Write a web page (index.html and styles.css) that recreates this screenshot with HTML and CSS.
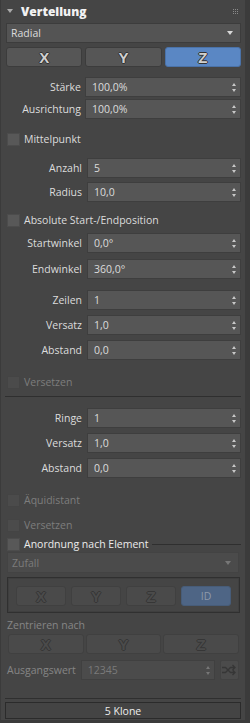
FILE: index.html
```html
<!DOCTYPE html>
<html lang="de">
<head>
<meta charset="utf-8">
<link rel="stylesheet" href="styles.css">
</head>
<body>
<div class="panel">
  <div class="header">
    <span class="twisty"></span>
    <span class="title">Verteilung</span>
    <span class="grip"><i></i><i></i><i></i><i></i><i></i><i></i><i></i><i></i><i></i></span>
  </div>

  <div class="select mt1"><span>Radial</span><span class="caret"></span></div>

  <div class="axes mt4">
    <div class="axis">X</div>
    <div class="axis">Y</div>
    <div class="axis on">Z</div>
  </div>

  <div class="field g1 mt10"><span class="lbl">Stärke</span><div class="spin"><span>100,0%</span><span class="arrows"></span></div></div>
  <div class="field g1 mt2"><span class="lbl">Ausrichtung</span><div class="spin"><span>100,0%</span><span class="arrows"></span></div></div>

  <div class="check mt13"><span class="box"></span><span>Mittelpunkt</span></div>

  <div class="field mt12"><span class="lbl">Anzahl</span><div class="spin"><span>5</span><span class="arrows"></span></div></div>
  <div class="field mt4"><span class="lbl">Radius</span><div class="spin"><span>10,0</span><span class="arrows"></span></div></div>

  <div class="check mt11"><span class="box"></span><span>Absolute Start-/Endposition</span></div>

  <div class="field mt6"><span class="lbl">Startwinkel</span><div class="spin"><span>0,0°</span><span class="arrows"></span></div></div>
  <div class="field mt6"><span class="lbl">Endwinkel</span><div class="spin"><span>360,0°</span><span class="arrows"></span></div></div>

  <div class="field mt11"><span class="lbl">Zeilen</span><div class="spin"><span>1</span><span class="arrows"></span></div></div>
  <div class="field mt5"><span class="lbl">Versatz</span><div class="spin"><span>1,0</span><span class="arrows"></span></div></div>
  <div class="field mt5"><span class="lbl">Abstand</span><div class="spin"><span>0,0</span><span class="arrows"></span></div></div>

  <div class="check off mt15"><span class="box"></span><span>Versetzen</span></div>

  <div class="rule mt7"></div>

  <div class="field mt11"><span class="lbl">Ringe</span><div class="spin"><span>1</span><span class="arrows"></span></div></div>
  <div class="field mt5"><span class="lbl">Versatz</span><div class="spin"><span>1,0</span><span class="arrows"></span></div></div>
  <div class="field mt5"><span class="lbl">Abstand</span><div class="spin"><span>0,0</span><span class="arrows"></span></div></div>

  <div class="check off mt15"><span class="box"></span><span>Äquidistant</span></div>
  <div class="check off mt11"><span class="box"></span><span>Versetzen</span></div>
  <div class="check bright mt5"><span class="box"></span><span>Anordnung nach Element</span><span class="line"></span></div>

  <div class="select dis mt1"><span>Zufall</span><span class="caret"></span></div>

  <div class="group mt4">
    <div class="axis dis">X</div>
    <div class="axis dis">Y</div>
    <div class="axis dis">Z</div>
    <div class="axis dis sel">ID</div>
  </div>

  <div class="caption mt4">Zentrieren nach</div>
  <div class="axes dis mt1">
    <div class="axis dis">X</div>
    <div class="axis dis">Y</div>
    <div class="axis dis">Z</div>
  </div>

  <div class="seed mt6">
    <span class="lbl">Ausgangswert</span>
    <div class="spin dis"><span>12345</span><span class="arrows"></span></div>
    <div class="shuffle">
      <svg width="16" height="12" viewBox="0 0 16 12"><path d="M1 3.5H4.5L9.5 8.5H14M1 8.5H4.5L9.5 3.5H14M11.5 1L14 3.5L11.5 6M11.5 6L14 8.5L11.5 11" fill="none" stroke="#363636" stroke-width="1.3"/></svg>
    </div>
  </div>

  <div class="rule mt18"></div>
  <div class="status mt3">5 Klone</div>
</div>
</body>
</html>
```

FILE: styles.css
```css
* { box-sizing: border-box; }
body {
  margin: 0;
  background: #3b3b3b;
  font-family: "Open Sans", "Noto Sans", sans-serif;
  font-size: 10.5px;
  color: #dcdcdc;
}
.panel {
  margin-left: 1px;
  width: 244px;
  height: 720px;
  background: #454545;
  padding: 0 4px 0 5px;
  display: flex;
  flex-direction: column;
}
.mt1 { margin-top: 1px; }
.mt2 { margin-top: 2px; }
.mt3 { margin-top: 3px; }
.mt4 { margin-top: 4px; }
.mt5 { margin-top: 5px; }
.mt6 { margin-top: 6px; }
.mt7 { margin-top: 7px; }
.mt10 { margin-top: 10px; }
.mt11 { margin-top: 11px; }
.mt12 { margin-top: 12px; }
.mt13 { margin-top: 13px; }
.mt15 { margin-top: 15px; }
.mt18 { margin-top: 18px; }

.header {
  height: 22px;
  display: flex;
  align-items: center;
}
.twisty {
  margin-left: 1px;
  width: 0; height: 0;
  border-left: 3px solid transparent;
  border-right: 3px solid transparent;
  border-top: 4px solid #aaa;
}
.title {
  margin-left: 8px;
  font-weight: 800;
  font-size: 12px;
  color: #f2f2f2;
}
.grip {
  margin-left: auto;
  margin-right: 3px;
  width: 5px;
  display: grid;
  grid-template-columns: repeat(3, 1px);
  grid-template-rows: repeat(3, 1px);
  gap: 1px;
}
.grip i { display: block; width: 1px; height: 1px; background: #8a8a8a; }

.select {
  height: 20px;
  background: #545454;
  border: 1px solid #3c3c3c;
  display: flex;
  align-items: center;
  padding: 0 7px 0 4px;
  color: #dcdcdc;
}
.caret {
  margin-left: auto;
  width: 0; height: 0;
  border-left: 3px solid transparent;
  border-right: 3px solid transparent;
  border-top: 4px solid #d8d8d8;
}
.select.dis {
  height: 21px;
  margin-left: 1px;
  margin-right: 2px;
  background: #4b4b4b;
  border-color: #434343;
  color: #7c7c7c;
}
.select.dis .caret { border-top-color: #777; }

.axes {
  display: flex;
  gap: 3px;
  height: 20px;
}
.axis {
  flex: 1;
  background: #565656;
  border: 1px solid #3c3c3c;
  border-radius: 3px;
  display: flex;
  align-items: center;
  justify-content: center;
  font-family: "Liberation Sans", Arial, sans-serif;
  font-weight: bold;
  font-size: 15px;
  color: #d0d0d0;
  text-shadow: 1px 0 0 #333, -1px 0 0 #333, 0 1px 0 #333, 0 -1px 0 #333;
}
.axis.on {
  background: #5a87c4;
  border-color: #4a72a8;
}
.axes.dis {
  gap: 2px;
  margin-left: 2px;
  margin-right: 2px;
}
.axis.dis {
  background: #4a4a4a;
  border-color: #404040;
  color: #4b4b4b;
  text-shadow: 1px 0 0 #363636, -1px 0 0 #363636, 0 1px 0 #363636, 0 -1px 0 #363636;
}
.axis.sel {
  background: #4e6585;
  border-color: #475c78;
  color: #8f9aaa;
  text-shadow: none;
  font-weight: normal;
  font-size: 10.5px;
  font-family: "Open Sans", "Noto Sans", sans-serif;
}

.field {
  display: flex;
  height: 20px;
}
.lbl {
  width: 81px;
  padding-right: 5px;
  text-align: right;
  align-self: center;
  white-space: nowrap;
}
.field.g1 .lbl { width: 79px; padding-right: 4px; }
.spin {
  flex: 1;
  background: #565656;
  border: 1px solid #3e3e3e;
  display: flex;
  align-items: center;
  padding: 0 3px 0 6px;
}
.arrows {
  margin-left: auto;
  width: 5px;
  height: 9px;
  position: relative;
}
.arrows::before, .arrows::after {
  content: "";
  position: absolute;
  left: 0;
  border-left: 2.5px solid transparent;
  border-right: 2.5px solid transparent;
}
.arrows::before { top: 0; border-bottom: 3px solid #c8c8c8; }
.arrows::after { bottom: 0; border-top: 3px solid #c8c8c8; }

.check {
  display: flex;
  align-items: center;
  height: 14px;
}
.box {
  margin-left: 1px;
  width: 13px;
  height: 13px;
  background: #585858;
  border: 1px solid #4c4c4c;
  margin-right: 4px;
}
.check.off { color: #7d7d7d; }
.check.off .box { background: #4b4b4b; border-color: #444; }
.check.bright { color: #ececec; }
.check .line {
  flex: 1;
  height: 1px;
  background: #2f2f2f;
  margin-left: 3px;
}

.rule {
  height: 1px;
  background: #2f2f2f;
  margin-left: -1px;
}

.group {
  margin-left: 1px;
  margin-right: 1px;
  height: 36px;
  border: 1px solid #303030;
  box-shadow: inset 0 0 0 1px #3f3f3f;
  padding: 8px 8px 6px 8px;
  display: flex;
  gap: 5px;
}
.group .axis { flex: 0 0 50px; height: 20px; }

.caption {
  height: 16px;
  line-height: 16px;
  margin-left: 1px;
  color: #868686;
}

.seed {
  display: flex;
  height: 20px;
  margin-left: 1px;
  margin-right: 2px;
  gap: 5px;
}
.seed .lbl {
  width: 69px;
  padding: 0;
  text-align: left;
  color: #858585;
}
.spin.dis {
  flex: 0 0 134px;
  background: #4b4b4b;
  border-color: #404040;
  color: #7a7a7a;
}
.spin.dis .arrows::before { border-bottom-color: #777; }
.spin.dis .arrows::after { border-top-color: #777; }
.shuffle {
  width: 20px;
  height: 20px;
  background: #4b4b4b;
  border: 1px solid #424242;
  border-radius: 2px;
  display: flex;
  align-items: center;
  justify-content: center;
}

.status {
  height: 17px;
  margin-left: -1px;
  border: 1px solid #2b2b2b;
  background: #444;
  display: flex;
  align-items: center;
  justify-content: center;
  color: #ececec;
}
```
